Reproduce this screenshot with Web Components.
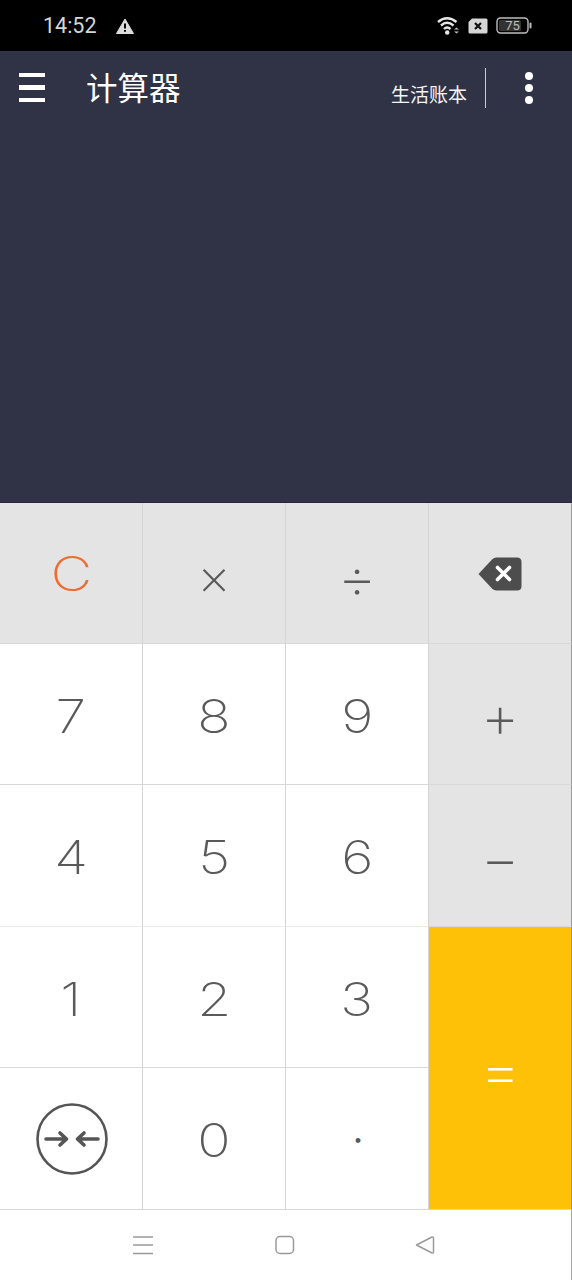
<!DOCTYPE html>
<html lang="zh">
<head>
<meta charset="utf-8">
<title>计算器</title>
<style>
  html, body { margin: 0; padding: 0; background: #fff; }
  body { width: 572px; height: 1280px; overflow: hidden; font-family: "Inter", "Noto Sans CJK SC", sans-serif; }
</style>
</head>
<body>
<calc-app>
  <status-bar slot="status"></status-bar>
  <app-bar slot="bar" title="计算器" link="生活账本"></app-bar>
  <calc-keypad slot="keys">
    <calc-key tone="grey" color="#ee6c2f" size="48" shift="2">C</calc-key>
    <calc-key tone="grey" shift="7" size="52" stretch="1">×</calc-key>
    <calc-key tone="grey" shift="8" size="60" stretch="1" weight="150">÷</calc-key>
    <calc-key tone="grey" edge="outer" shift="1" stretch="1">
      <svg width="44" height="34" viewBox="0 0 44 34">
        <path d="M0.5 17 L14 2.5 Q16 0.5 18.5 0.5 L39 0.5 Q43.500 0.5 43.500 5 L43.500 29 Q43.500 33.500 39 33.500 L18.500 33.500 Q16 33.500 14 31.500 Z" fill="#4d4d4d"/>
        <path d="M19.500 10.500 L31.500 22.500 M31.500 10.500 L19.500 22.500" stroke="#fff" stroke-width="3.600" stroke-linecap="round"/>
      </svg>
    </calc-key>

    <calc-key>7</calc-key>
    <calc-key>8</calc-key>
    <calc-key>9</calc-key>
    <calc-key tone="grey" edge="outer" shift="4" size="60" stretch="1" weight="150">+</calc-key>

    <calc-key line="#ececec">4</calc-key>
    <calc-key line="#ececec">5</calc-key>
    <calc-key line="#ececec">6</calc-key>
    <calc-key tone="grey" edge="outer" shift="4" size="60" stretch="1" weight="150">−</calc-key>

    <calc-key>1</calc-key>
    <calc-key>2</calc-key>
    <calc-key>3</calc-key>
    <calc-key tone="amber" edge="amber" shift="4" color="#fff" size="60" stretch="1.1" style="grid-row: span 2">=</calc-key>

    <calc-key shift="0" stretch="1">
      <svg width="72" height="72" viewBox="0 0 72 72" style="margin-left:1px">
        <circle cx="36" cy="36" r="34.500" fill="none" stroke="#555" stroke-width="2.600"/>
        <path d="M10 36 H30 M24 30 L30.500 36 L24 42 M62 36 H42 M48 30 L41.500 36 L48 42" fill="none" stroke="#555" stroke-width="3.600" stroke-linecap="round" stroke-linejoin="round"/>
      </svg>
    </calc-key>
    <calc-key>0</calc-key>
    <calc-key weight="300" stretch="1" shift="0" style="padding-left: 2px">·</calc-key>
  </calc-keypad>
  <nav-bar slot="nav"></nav-bar>
</calc-app>

<script>
class calcApp extends HTMLElement {
  constructor() {
    super();
    this.attachShadow({ mode: "open" });
    this.shadowRoot.innerHTML = `
      <style>
        :host { display: flex; flex-direction: column; width: 572px; height: 1280px; }
        .display { height: 377px; background: #2f3345; border-bottom: 1px solid #26293a; box-sizing: border-box; }
      </style>
      <slot name="status"></slot>
      <slot name="bar"></slot>
      <div class="display"></div>
      <slot name="keys"></slot>
      <slot name="nav"></slot>
    `;
  }
}
customElements.define("calc-app", calcApp);

class statusBar extends HTMLElement {
  constructor() {
    super();
    this.attachShadow({ mode: "open" });
    this.shadowRoot.innerHTML = `
      <style>
        :host { display: flex; align-items: center; height: 51px; background: #000; color: #d6d6d6; box-sizing: border-box; padding: 0 40px 0 43px; }
        .time { font: 400 21.500px "Roboto", sans-serif; width: 73px; }
        .warn { display: block; }
        .right { margin-left: auto; display: flex; align-items: center; gap: 8px; }
        svg { display: block; }
        .battery { position: relative; width: 36px; height: 17px; }
        .battery span { position: absolute; left: 0; right: 3px; top: 0; line-height: 17px; text-align: center; font: 400 13px/17px "Roboto", sans-serif; color: #bdbdbd; }
      </style>
      <span class="time">14:52</span>
      <svg class="warn" width="18" height="16" viewBox="0 0 18 16">
        <path d="M9 1 L17.500 15.500 H0.500 Z" fill="#dcdcdc" stroke="#dcdcdc" stroke-linejoin="round"/>
        <path d="M9 5.500 V10.500 M9 12 V13.800" stroke="#000" stroke-width="2"/>
      </svg>
      <div class="right">
        <svg width="23" height="19" viewBox="0 0 23 19">
          <path d="M1 6 Q10 -1.500 19.500 6 M4 9.500 Q10 4 16.500 9.500 M7 13 Q10 10 13.500 13" fill="none" stroke="#e6e6e6" stroke-width="2.400"/>
          <circle cx="10.200" cy="16.500" r="2.200" fill="#e6e6e6"/>
          <path d="M17 13.500 L19.500 11.500 L22 13.500 Z M17 15.500 L19.500 17.500 L22 15.500 Z" fill="#bdbdbd"/>
        </svg>
        <svg width="20" height="16" viewBox="0 0 20 16">
          <path d="M4 0.500 H18 Q19.500 0.500 19.500 2 V14 Q19.500 15.500 18 15.500 H2 Q0.500 15.500 0.500 14 V4 Z" fill="#d6d6d6"/>
          <path d="M7 5 L13 11 M13 5 L7 11" stroke="#111" stroke-width="2.200"/>
        </svg>
        <div class="battery">
          <svg width="36" height="17" viewBox="0 0 36 17">
            <rect x="1" y="1" width="31" height="15" rx="3.500" fill="none" stroke="#bdbdbd" stroke-width="1.400"/>
            <rect x="3" y="3" width="22" height="11" rx="1.500" fill="#333"/>
            <rect x="33.500" y="5.500" width="2" height="6" rx="1" fill="#bdbdbd"/>
          </svg>
          <span>75</span>
        </div>
      </div>
    `;
  }
}
customElements.define("status-bar", statusBar);

class appBar extends HTMLElement {
  constructor() {
    super();
    this.attachShadow({ mode: "open" });
    this.heading = this.getAttribute("title");
    this.link = this.getAttribute("link");
    this.shadowRoot.innerHTML = `
      <style>
        :host { display: flex; align-items: center; height: 75px; background: #2f3345; color: #fff; box-sizing: border-box; padding: 0 0 2px 19px; font-family: "Noto Sans CJK SC", sans-serif; }
        .menu { display: flex; flex-direction: column; gap: 8px; width: 26px; }
        .menu i { display: block; height: 4.500px; background: #fff; }
        h1 { margin: 0 0 4px 41px; font-size: 31.500px; font-weight: 400; line-height: 40px; }
        .link { margin-left: auto; font-size: 19px; line-height: 26px; margin-top: 13px; color: #f4f4f6; }
        .divider { width: 1px; height: 40px; background: #c9cbd2; margin: 0 0 0 18px; }
        .dots { display: flex; flex-direction: column; gap: 4px; margin: 0 39px 0 39px; }
        .dots i { display: block; width: 8px; height: 8px; border-radius: 50%; background: #fff; }
      </style>
      <div class="menu"><i></i><i></i><i></i></div>
      <h1>${this.heading}</h1>
      <span class="link">${this.link}</span>
      <div class="divider"></div>
      <div class="dots"><i></i><i></i><i></i></div>
    `;
  }
}
customElements.define("app-bar", appBar);

class calcKeypad extends HTMLElement {
  constructor() {
    super();
    this.attachShadow({ mode: "open" });
    this.shadowRoot.innerHTML = `
      <style>
        :host { display: grid; grid-template-columns: repeat(4, 143px); grid-template-rows: 141px 141px 142px 141px 142px; background: #fff; }
      </style>
      <slot></slot>
    `;
  }
}
customElements.define("calc-keypad", calcKeypad);

class calcKey extends HTMLElement {
  constructor() {
    super();
    this.attachShadow({ mode: "open" });
    this.tone = this.getAttribute("tone");
    this.shift = this.getAttribute("shift") || 3;
    this.c1 = this.getAttribute("color") || "#5a5a5a";
    this.weight = this.getAttribute("weight") || 200;
    this.size = this.getAttribute("size") || 46;
    // the reference digits are wider than anything installed
    this.stretch = this.getAttribute("stretch") || 1.2;
    const fill = { grey: "#e4e4e4", amber: "#fec107" }[this.tone] || "#fff";
    const right = { outer: "#9a9a9a", amber: "#b8921c" }[this.getAttribute("edge")] || "#d4d4d4";
    const line = this.getAttribute("line") || "#d8d8d8";
    this.shadowRoot.innerHTML = `
      <style>
        :host {
          display: flex; align-items: center; justify-content: center;
          box-sizing: border-box;
          padding-top: ${this.shift}px;
          background: ${fill};
          color: ${this.c1};
          border-right: 1px solid ${right};
          border-bottom: 1px solid ${line};
          font: ${this.weight} ${this.size}px/1 "Inter", sans-serif;
          opacity: .999;
        }
        .face { display: block; transform: scaleX(${this.stretch}); }
        ::slotted(svg) { display: block; }
      </style>
      <span class="face"><slot></slot></span>
    `;
  }
}
customElements.define("calc-key", calcKey);

class navBar extends HTMLElement {
  constructor() {
    super();
    this.attachShadow({ mode: "open" });
    this.shadowRoot.innerHTML = `
      <style>
        :host { display: flex; align-items: center; height: 70px; background: #fff; box-sizing: border-box; padding-left: 133px; border-right: 1px solid #a8a8a8; }
        svg { display: block; }
      </style>
      <svg width="20" height="20" viewBox="0 0 20 20"><path d="M0 2 H20 M0 10 H20 M0 18.500 H20" stroke="#9a9a9a" stroke-width="1.500"/></svg>
      <svg width="20" height="20" viewBox="0 0 20 20" style="margin-left:122px"><rect x="1" y="1.500" width="17.500" height="17" rx="4" fill="none" stroke="#9a9a9a" stroke-width="1.500"/></svg>
      <svg width="20" height="20" viewBox="0 0 20 20" style="margin-left:120px"><path d="M1.500 10 L17 2 Q18.500 1.500 18.500 3 V17 Q18.500 18.500 17 18 Z" fill="none" stroke="#9a9a9a" stroke-width="1.500" stroke-linejoin="round"/></svg>
    `;
  }
}
customElements.define("nav-bar", navBar);
</script>
</body>
</html>
